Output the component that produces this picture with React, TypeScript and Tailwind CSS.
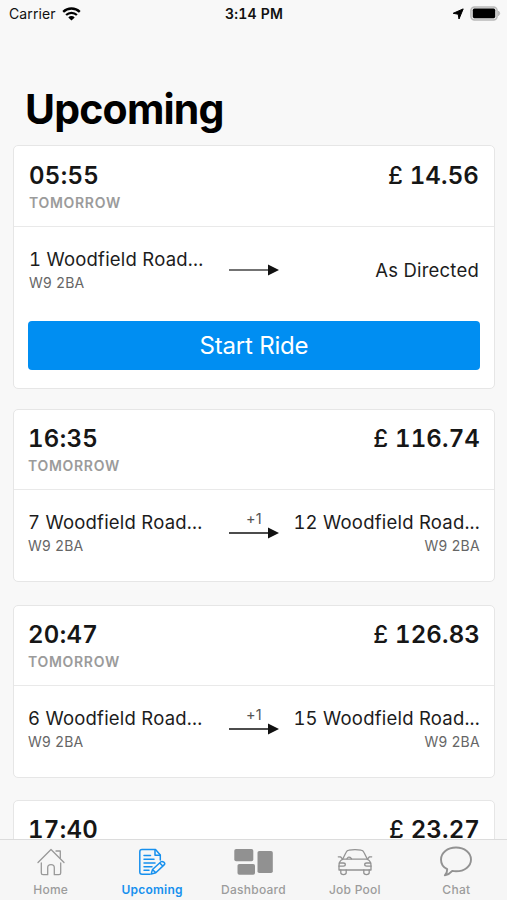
import { clsx } from "clsx";
import type { ReactNode } from "react";

type Stop = {
  address: string;
  postcode?: string;
};

type Ride = {
  id: string;
  time: string;
  day?: string;
  price: string;
  from?: Stop;
  to?: Stop;
  extraStops?: number;
  canStart?: boolean;
};

const rides: Ride[] = [
  {
    id: "r1",
    time: "05:55",
    day: "Tomorrow",
    price: "14.56",
    from: { address: "1 Woodfield Road...", postcode: "W9 2BA" },
    to: { address: "As Directed" },
    canStart: true,
  },
  {
    id: "r2",
    time: "16:35",
    day: "Tomorrow",
    price: "116.74",
    from: { address: "7 Woodfield Road...", postcode: "W9 2BA" },
    to: { address: "12 Woodfield Road...", postcode: "W9 2BA" },
    extraStops: 1,
  },
  {
    id: "r3",
    time: "20:47",
    day: "Tomorrow",
    price: "126.83",
    from: { address: "6 Woodfield Road...", postcode: "W9 2BA" },
    to: { address: "15 Woodfield Road...", postcode: "W9 2BA" },
    extraStops: 1,
  },
  {
    id: "r4",
    time: "17:40",
    price: "23.27",
  },
];

function StatusBar() {
  return (
    <div className="grid h-[27px] shrink-0 grid-cols-3 items-center pl-[9px] pr-[6px] text-[14px] text-[#111]">
      <div className="flex items-center gap-[6px]">
        <span className="tracking-[0.1px]">Carrier</span>
        <svg width="19" height="14" viewBox="0 0 19 14" fill="none" stroke="#000">
          <path d="M1.2 4.9a11.8 11.8 0 0 1 16.6 0" strokeWidth="2.3" />
          <path d="M4.1 8a7.7 7.7 0 0 1 10.8 0" strokeWidth="2.2" />
          <path d="M9.5 13.6 6.3 10.4a4.5 4.5 0 0 1 6.4 0z" fill="#000" stroke="none" />
        </svg>
      </div>
      <div className="pr-[2px] text-center text-[14px] font-semibold tabular-nums tracking-[0.2px]">3:14 PM</div>
      <div className="flex items-center justify-end gap-[6px]">
        <svg width="12" height="12" viewBox="0 0 12 12">
          <path d="M11.2.9 7 11 6.2 6.2 1.2 5.3z" fill="#000" stroke="#000" strokeLinejoin="round" strokeWidth="1" />
        </svg>
        <svg width="31" height="15" viewBox="0 0 31 15">
          <rect x=".9" y=".9" width="26.2" height="13" rx="3.6" fill="#e4e4e4" stroke="#b9b9b9" strokeWidth="1.5" />
          <rect x="2.8" y="2.6" width="22.4" height="9.6" rx="1.6" fill="#000" />
          <path d="M28.5 5q2.4 2.3 0 4.7z" fill="#b9b9b9" stroke="#b9b9b9" />
        </svg>
      </div>
    </div>
  );
}

function Arrow({ extraStops }: { extraStops?: number }) {
  return (
    <div className="flex w-[50px] shrink-0 flex-col items-center">
      {extraStops && (
        <span className="h-[13px] text-[14.5px] leading-[9px] tracking-[0.3px] text-[#555]">
          +{extraStops}
        </span>
      )}
      <svg width="50" height="12" viewBox="0 0 50 12">
        <path d="M0 6h41" stroke={extraStops ? "#111" : "#444"} strokeWidth="1.4" />
        <path d="M39 .6 50 6 39 11.4z" fill="#111" />
      </svg>
    </div>
  );
}

function StopLabel({ stop, align }: { stop: Stop; align: "left" | "right" }) {
  return (
    <div className={clsx("flex-1 whitespace-nowrap", align === "right" && "text-right")}>
      <div
        className={clsx(
          "text-[18.5px] leading-6 tabular-nums tracking-[0.22px] text-[#1c1c1c]",
          !stop.postcode && "pb-[3px]",
        )}
      >
        {stop.address}
      </div>
      {stop.postcode && (
        <div className="text-[14px] leading-6 tracking-[0.3px] text-[#666]">{stop.postcode}</div>
      )}
    </div>
  );
}

function RideCard({ ride }: { ride: Ride }) {
  return (
    <div className="rounded-[5px] border border-[#e6e6e6] bg-white">
      <div
        className={clsx(
          "flex justify-between border-b border-[#e9e9e9]",
          ride.canStart ? "h-[81px] px-[15px] pt-[14px]" : "h-20 px-[14px] pt-[13px]",
        )}
      >
        <div>
          <div className="text-[24px] font-semibold leading-8 tabular-nums tracking-[0.3px] text-[#161616]">
            {ride.time}
          </div>
          {ride.day && (
            <div className="pt-[1px] text-[14px] font-semibold uppercase leading-5 tracking-[0.7px] text-[#9b9b9b]">
              {ride.day}
            </div>
          )}
        </div>
        <div className="text-[24px] font-semibold leading-8 tabular-nums tracking-[0.15px] text-[#161616]">
          <span className="font-medium">£</span> {ride.price}
        </div>
      </div>
      <div
        className={clsx(
          "flex items-start pt-[20px]",
          ride.canStart ? "h-[90px] px-[15px]" : "h-[91px] px-[14px]",
        )}
      >
        {ride.from && ride.to && (
          <div className="flex h-12 w-full items-center">
            <StopLabel stop={ride.from} align="left" />
            <div className={clsx("flex h-12", ride.extraStops ? "items-start pt-[4px]" : "items-center pb-[3px]")}>
              <Arrow extraStops={ride.extraStops} />
            </div>
            <StopLabel stop={ride.to} align="right" />
          </div>
        )}
      </div>
      {ride.canStart && (
        <div className="h-[71px] px-[14px] pt-1">
          <button className="h-[49px] w-full rounded-[4px] bg-[#008ef2] text-[24px] tracking-[-0.2px] text-white">
            Start Ride
          </button>
        </div>
      )}
    </div>
  );
}

function HomeIcon() {
  return (
    <svg width="28" height="28" viewBox="0 0 28 28" fill="none" stroke="#999" strokeWidth="1.3" strokeLinecap="round" strokeLinejoin="round">
      <path d="M1 14.5 14 1.5l13 13" />
      <path d="M4.3 15v10q0 1.7 1.7 1.7h4.7v-7q0-3 3.3-3t3.3 3v7H22q1.7 0 1.7-1.7V15" />
      <path d="M19 3h4.3v7" />
    </svg>
  );
}

function UpcomingIcon() {
  return (
    <svg width="28" height="28" viewBox="0 0 28 28" fill="none" stroke="#1690ee" strokeWidth="1.5" strokeLinecap="round" strokeLinejoin="round">
      <path d="M12 26.200H4q-2.200 0-2.200-2.200V3.700Q1.800 1.500 4 1.500h13.500l4.800 5.400v5.100" />
      <path d="M17 1.700v5.500h5.200" />
      <path d="M6 7.500h6.500M6 11.300h10M6 15h11M6 18.700h8M6 22.300h5" />
      <path d="m14.500 21.500 8.500-7.700q1-.9 2.800.4t.3 2.700l-8.300 7.900-4.600 1.300zM22 15.200l2.500 2.500M14.500 21.500l3.300 3.300" />
    </svg>
  );
}

function DashboardIcon() {
  return (
    <svg width="40" height="28" viewBox="0 0 40 28" fill="#919191">
      <rect x=".3" y="1" width="19" height="12.3" rx="1.8" />
      <rect x="3.5" y="16" width="17.5" height="10.8" rx="1.8" />
      <rect x="23.5" y="3" width="15.3" height="22" rx="1.8" />
    </svg>
  );
}

function CarIcon() {
  return (
    <svg width="36" height="28" viewBox="0 0 36 28" fill="none" stroke="#929292" strokeWidth="1.3" strokeLinecap="round" strokeLinejoin="round">
      <path d="M5.5 11.5 9 4.5Q10 2.3 12 2.1q6-.8 12 0 2 .2 3 2.4l3.500 7" />
      <path d="M1.300 8.800h2.200l2.200 2.400h24.600l2.200-2.400h2.200" />
      <path d="M5.500 11.300C2.500 13 2 15 2 17.500V22h32v-4.500c0-2.500-.5-4.500-3.500-6.200" />
      <path d="M2.300 15h4q2 0 2 1.600t-2 1.600H2M33.700 15h-4q-2 0-2 1.600t2 1.600H34" />
      <path d="M3.800 22v2.800q0 1.800 2.700 1.800t2.700-1.800V22M26.800 22v2.800q0 1.800 2.700 1.800t2.700-1.800V22" />
      <path d="M10 10.800q1-2.400 3-1.500l1.500 1.500" />
    </svg>
  );
}

function ChatIcon() {
  return (
    <svg width="34" height="32" viewBox="0 0 34 32" fill="none" stroke="#929292" strokeWidth="1.9" strokeLinejoin="round">
      <path d="M17 1.500c8.500 0 15 5.300 15 12S25.500 25.300 17 25.300c-1.300 0-2.500-.1-3.700-.4-2 2.400-4 3.800-7.500 4.500 1.500-1.500 2.500-3.800 2.400-6.200C4.200 21.300 2 17.800 2 13.500 2 6.800 8.500 1.500 17 1.500z" />
    </svg>
  );
}

function Tab({ label, active, children }: { label: string; active?: boolean; children: ReactNode }) {
  return (
    <div className="flex flex-1 flex-col items-center pt-[5px]">
      <div className="flex h-9 items-center justify-center">{children}</div>
      <span
        className={clsx(
          "pt-[1px] text-[12px] leading-5 tracking-[0.25px]",
          active ? "font-semibold text-[#1690ee]" : "font-medium text-[#9c9c9c]",
        )}
      >
        {label}
      </span>
    </div>
  );
}

export default function App() {
  return (
    <div className="flex h-[900px] w-[507px] flex-col overflow-hidden bg-[#f8f8f8] font-['Inter','Liberation_Sans',sans-serif]">
      <StatusBar />
      <h1 className="h-[118px] shrink-0 pl-[25px] pt-[58px] text-[41px] font-bold leading-[48px] tracking-[-0.8px] text-black">
        Upcoming
      </h1>

      <div className="flex min-h-0 flex-1 flex-col overflow-hidden pl-[13px] pr-3">
        {rides.map((ride) => (
          <div key={ride.id} className={clsx("shrink-0", ride.canStart ? "pb-5" : "pb-[22.5px]")}>
            <RideCard ride={ride} />
          </div>
        ))}
      </div>

      <nav className="flex h-[61px] shrink-0 border-t border-[#dcdcdc] bg-[#f6f6f6]">
        <Tab label="Home">
          <HomeIcon />
        </Tab>
        <Tab label="Upcoming" active>
          <UpcomingIcon />
        </Tab>
        <Tab label="Dashboard">
          <DashboardIcon />
        </Tab>
        <Tab label="Job Pool">
          <CarIcon />
        </Tab>
        <Tab label="Chat">
          <ChatIcon />
        </Tab>
      </nav>
    </div>
  );
}
